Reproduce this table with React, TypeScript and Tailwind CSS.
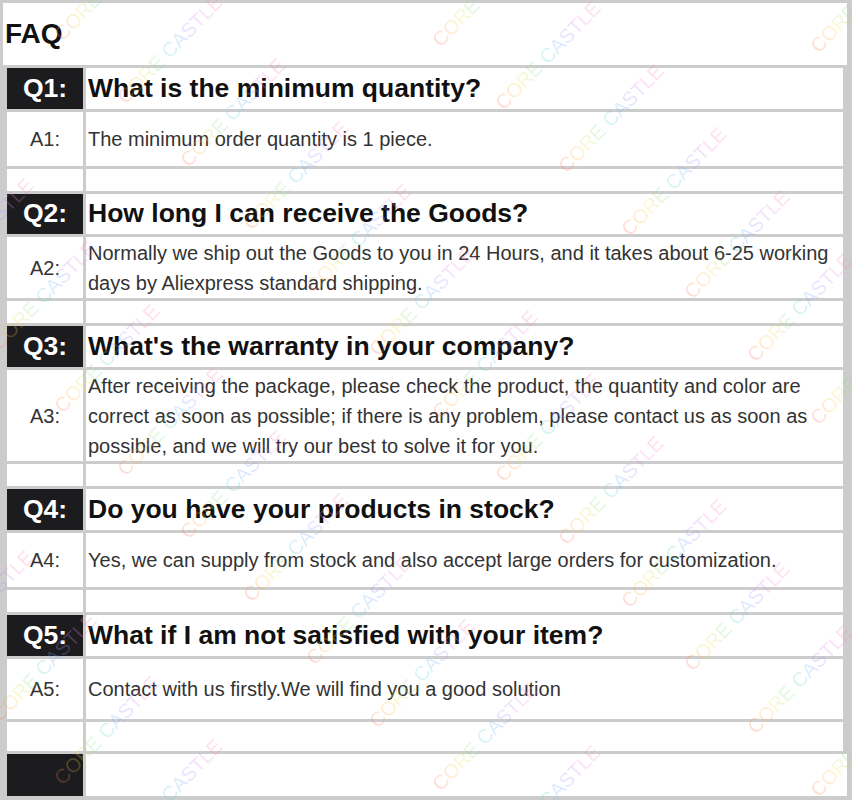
import React from "react";

type Row =
  | { kind: "q"; label: string; text: string; h: string }
  | { kind: "a"; label: string; text: string; h: string }
  | { kind: "e"; h: string }
  | { kind: "end"; h: string };

const rows: Row[] = [
  { kind: "q", label: "Q1:", text: "What is the minimum quantity?", h: "h-[41px]" },
  { kind: "a", label: "A1:", text: "The minimum order quantity is 1 piece.", h: "h-[54px]" },
  { kind: "e", h: "h-[22px]" },
  { kind: "q", label: "Q2:", text: "How long I can receive the Goods?", h: "h-[40px]" },
  {
    kind: "a",
    label: "A2:",
    text: "Normally we ship out the Goods to you in 24 Hours, and it takes about 6-25 working days by Aliexpress standard shipping.",
    h: "h-[61px]",
  },
  { kind: "e", h: "h-[22px]" },
  { kind: "q", label: "Q3:", text: "What's the warranty in your company?", h: "h-[41px]" },
  {
    kind: "a",
    label: "A3:",
    text: "After receiving the package, please check the product, the quantity and color are correct as soon as possible; if there is any problem, please contact us as soon as possible, and we will try our best to solve it for you.",
    h: "h-[91px]",
  },
  { kind: "e", h: "h-[22px]" },
  { kind: "q", label: "Q4:", text: "Do you have your products in stock?", h: "h-[41px]" },
  {
    kind: "a",
    label: "A4:",
    text: "Yes, we can supply from stock and also accept large orders for customization.",
    h: "h-[54px]",
  },
  { kind: "e", h: "h-[22px]" },
  { kind: "q", label: "Q5:", text: "What if I am not satisfied with your item?", h: "h-[41px]" },
  { kind: "a", label: "A5:", text: "Contact with us firstly.We will find you a good solution", h: "h-[60px]" },
  { kind: "e", h: "h-[29px]" },
  { kind: "end", h: "h-[42px]" },
];

function Watermarks() {
  const pts: { x: number; y: number }[] = [];
  for (let j = -3; j <= 3; j++) {
    for (let k = -4; k <= 16; k++) {
      const x = 128 + 63 * k + 378 * j;
      const y = 107 + 63 * k + 6 * j;
      if (x > -180 && x < 880 && y > -20 && y < 960) pts.push({ x, y });
    }
  }
  return (
    <div className="pointer-events-none absolute inset-0 overflow-hidden">
      {pts.map((p, i) => (
        <div
          key={i}
          className="absolute h-[20px] origin-bottom-left -rotate-[46deg] whitespace-nowrap bg-[linear-gradient(90deg,#ff6b6b,#ffb347,#f2e35c,#7be08a,#5fd3e0,#7aa8ff,#c08bff,#ff8ad8,#ff7aa8)] bg-clip-text text-[20px] leading-[20px] text-transparent opacity-25 [font-family:'Liberation_Sans',Arial,sans-serif]"
          style={{ left: p.x, top: p.y - 20 }}
        >
          CORE CASTLE
        </div>
      ))}
    </div>
  );
}

export default function App() {
  return (
    <div className="relative h-[800px] w-[852px] overflow-hidden bg-[#cccccc] pl-[3px] pr-[5px] pt-[3px] [font-family:'Liberation_Sans',Arial,sans-serif]">
      <div className="flex h-[62px] items-center bg-white pl-[2px] text-[28px] font-bold text-[#111]">FAQ</div>
      <div className="mt-[3px] flex flex-col gap-[3px] pl-[4px]">
        {rows.map((r, i) => {
          if (r.kind === "q") {
            return (
              <div key={i} className={`mr-[4px] grid grid-cols-[76px_1fr] gap-x-[3px] ${r.h}`}>
                <div className="flex items-center justify-center bg-[#1c1c1e] text-[26.5px] font-bold text-white">
                  {r.label}
                </div>
                <div className="flex items-center bg-white pl-[2px] text-[26.5px] font-bold text-[#111]">{r.text}</div>
              </div>
            );
          }
          if (r.kind === "a") {
            return (
              <div key={i} className={`mr-[4px] grid grid-cols-[76px_1fr] gap-x-[3px] ${r.h}`}>
                <div className="flex items-center justify-center bg-white text-[20px] text-[#333]">{r.label}</div>
                <div className="flex items-center bg-white pl-[2px] text-[20px] leading-[30px] text-[#333]">
                  <p>{r.text}</p>
                </div>
              </div>
            );
          }
          if (r.kind === "e") {
            return (
              <div key={i} className={`mr-[4px] grid grid-cols-[76px_1fr] gap-x-[3px] ${r.h}`}>
                <div className="bg-white" />
                <div className="bg-white" />
              </div>
            );
          }
          return (
            <div key={i} className={`grid grid-cols-[76px_1fr] gap-x-[3px] ${r.h}`}>
              <div className="bg-[#1c1c1e]" />
              <div className="bg-white" />
            </div>
          );
        })}
      </div>
      <Watermarks />
    </div>
  );
}
